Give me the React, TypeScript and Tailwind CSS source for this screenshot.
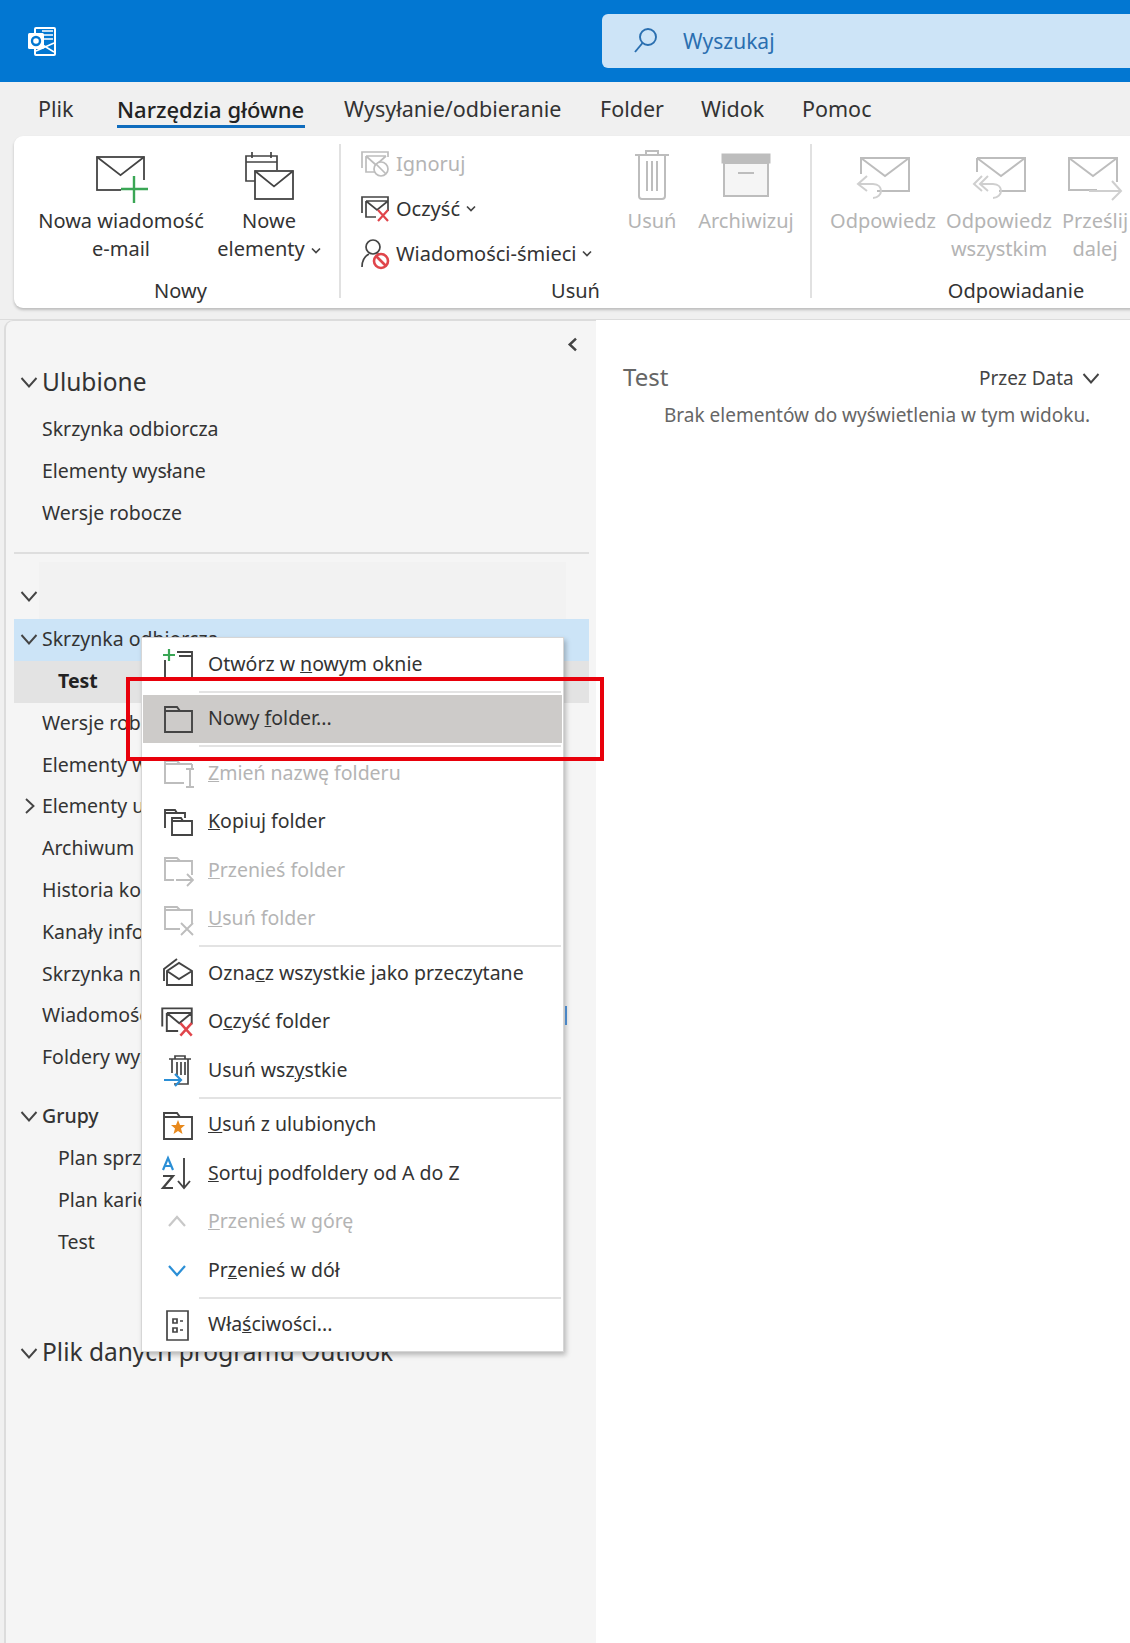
import type { ReactNode } from "react";

const dark = "#444";
const off = "#bdbdbd";

function Chevron({ dir = "down", color = "#444", size = 18, weight = 1.9 }: { dir?: "down" | "up" | "right" | "left"; color?: string; size?: number; weight?: number }) {
  const d = { down: "M1.500 5l7.500 8.500L16.500 5", up: "M1.500 13L9 4.500l7.500 8.500", right: "M6 2l7.500 7L6 16", left: "M12 2L4.500 9l7.500 7" }[dir];
  return (
    <svg width={size} height={size} viewBox="0 0 18 18" fill="none" stroke={color} strokeWidth={weight}>
      <path d={d} />
    </svg>
  );
}

function Caret() {
  return (
    <svg width="10" height="8" viewBox="0 0 10 8" fill="none" stroke="#444" strokeWidth="1.7" className="ml-[6px] inline-block">
      <path d="M1 1.500l4 4 4-4" />
    </svg>
  );
}

function LogoIcon() {
  return (
    <svg width="29" height="29" viewBox="0 0 29 29" fill="none">
      <rect x="8" y="1" width="20" height="27" rx="1" stroke="#fff" strokeWidth="2" />
      <path d="M15 4h11M15 8h11M15 12h11M9 24l18-8M14 17l13 8" stroke="#fff" strokeWidth="1.500" />
      <rect x="1" y="6" width="16" height="16" rx="1.500" fill="#fff" />
      <circle cx="9" cy="14" r="4" fill="none" stroke="#0277d2" strokeWidth="2.400" />
    </svg>
  );
}

function SearchIcon() {
  return (
    <svg width="26" height="28" viewBox="0 0 26 28" fill="none" stroke="#2a6fb0" strokeWidth="1.900">
      <circle cx="15" cy="10" r="8" />
      <path d="M9.500 16L2 25" />
    </svg>
  );
}

function Mail({ color, x = 0, y = 0, w = 48, h = 33 }: { color: string; x?: number; y?: number; w?: number; h?: number }) {
  return (
    <g stroke={color} fill="none" strokeWidth="1.800">
      <rect x={x} y={y} width={w} height={h} />
      <path d={`M${x} ${y}L${x + w / 2} ${y + h * 0.55}L${x + w} ${y}`} />
    </g>
  );
}

function NewMailIcon() {
  return (
    <svg width="56" height="56" viewBox="0 0 56 56" fill="none">
      <Mail color={dark} x={4} y={9} w={47} h={33} />
      <rect x="28" y="32" width="26" height="20" fill="#fff" />
      <path d="M41 28v27M28 41h27" stroke="#3aa655" strokeWidth="2.400" />
    </svg>
  );
}

function NewItemsIcon() {
  return (
    <svg width="56" height="56" viewBox="0 0 56 56" fill="none">
      <path d="M14 33H5V8h31v14M5 14h31M11 4v6M30 4v6" stroke={dark} strokeWidth="1.700" />
      <Mail color={dark} x={14} y={23} w={38} h={28} />
    </svg>
  );
}

function IgnoreIcon() {
  return (
    <svg width="30" height="28" viewBox="0 0 30 28" fill="none" stroke={off} strokeWidth="1.700">
      <path d="M2 18V2h26v5M6 6h20M6 6v16h10M6 6l10 9 10-9" />
      <circle cx="21" cy="19" r="7" fill="#fff" />
      <path d="M16 14l10 10" />
    </svg>
  );
}

function CleanIcon({ size = 30 }: { size?: number }) {
  return (
    <svg width={size} height={size - 2} viewBox="0 0 30 28" fill="none" stroke={dark} strokeWidth="1.700">
      <path d="M2 18V2h26v4M6 6h22v10M6 6v16h10M6 6l11 9 11-9" />
      <path d="M18 15l10 11M28 15L18 26" stroke="#e0454b" strokeWidth="2.200" />
    </svg>
  );
}

function JunkIcon() {
  return (
    <svg width="30" height="32" viewBox="0 0 30 32" fill="none" stroke={dark} strokeWidth="1.700">
      <circle cx="13" cy="9" r="7" />
      <path d="M2 29c0-7 3-11 7-13M17 16h2" />
      <circle cx="21" cy="23" r="7" stroke="#e0454b" strokeWidth="2.600" />
      <path d="M16 18l10 10" stroke="#e0454b" strokeWidth="2.600" />
    </svg>
  );
}

function TrashIcon() {
  return (
    <svg width="56" height="56" viewBox="0 0 56 56" fill="none" stroke={off} strokeWidth="2">
      <path d="M11 7h34M22 7V3h12v4M15 7v41a3 3 0 0 0 3 3h20a3 3 0 0 0 3-3V7M23 13v30M28 13v30M33 13v30" />
    </svg>
  );
}

function ArchiveIcon() {
  return (
    <svg width="56" height="56" viewBox="0 0 56 56" fill="none">
      <rect x="4" y="6" width="48" height="9" fill="#bdbdbd" stroke={off} />
      <rect x="6" y="15" width="44" height="33" fill="#f5f5f5" stroke={off} strokeWidth="2" />
      <path d="M20 25h16" stroke={off} strokeWidth="2" />
    </svg>
  );
}

function ReplyIcon() {
  return (
    <svg width="56" height="56" viewBox="0 0 56 56" fill="none">
      <path d="M10 26V10h48v33H26M10 10l24 18 24-18" stroke={off} strokeWidth="2" transform="translate(-4 0)" />
      <path d="M12 28l-9 8 9 7M3 36h15c6 0 8 4 8 7s-3 7-8 7" stroke="#cfcfcf" strokeWidth="2" />
    </svg>
  );
}

function ReplyAllIcon() {
  return (
    <svg width="56" height="56" viewBox="0 0 56 56" fill="none">
      <path d="M6 10h48v33H28M6 10v14M6 10l24 18 24-18" stroke={off} strokeWidth="2" />
      <path d="M11 28l-8 8 8 7M17 28l-8 8 8 7M10 36h12c6 0 8 4 8 7s-3 7-8 7" stroke="#cfcfcf" strokeWidth="2" />
    </svg>
  );
}

function ForwardIcon() {
  return (
    <svg width="56" height="56" viewBox="0 0 56 56" fill="none">
      <path d="M30 42H2V10h48v24M2 10l24 18 24-18" stroke={off} strokeWidth="2" />
      <path d="M22 43h32M45 33l9 10-9 9" stroke="#cfcfcf" strokeWidth="2" />
    </svg>
  );
}

function MenuIcon({ name }: { name: string }) {
  switch (name) {
    case "window":
      return (
        <svg width="34" height="34" viewBox="0 0 34 34" fill="none">
          <path d="M5 13v18h27V5H17M19 9h13" stroke={dark} strokeWidth="1.900" />
          <path d="M9 2v12M3 8h12" stroke="#3aa655" strokeWidth="2.200" />
        </svg>
      );
    case "folder":
      return (
        <svg width="34" height="34" viewBox="0 0 34 34" fill="none" stroke={dark} strokeWidth="1.900">
          <path d="M5 30V5h12l3 4h12v21zM5 9h15" />
        </svg>
      );
    case "rename":
      return (
        <svg width="34" height="34" viewBox="0 0 34 34" fill="none" stroke={off} strokeWidth="1.900">
          <path d="M24 27H5V5h12l3 3h12M5 8h15M32 8v4M26 13h8M30 13v17M26 31h8" />
        </svg>
      );
    case "copy":
      return (
        <svg width="34" height="34" viewBox="0 0 34 34" fill="none" stroke={dark} strokeWidth="1.900">
          <path d="M5 23V5h10l2 3h8v5M5 8h12M12 30V13h9l2 3h9v14zM12 16h11" />
        </svg>
      );
    case "move":
      return (
        <svg width="34" height="34" viewBox="0 0 34 34" fill="none" stroke={off} strokeWidth="1.900">
          <path d="M14 27H5V5h12l3 3h12v14M5 8h15M16 27h17M27 21l6 6-6 6" />
        </svg>
      );
    case "delete":
      return (
        <svg width="34" height="34" viewBox="0 0 34 34" fill="none" stroke={off} strokeWidth="1.900">
          <path d="M20 27H5V5h12l3 3h12v14M5 8h15M21 21l12 12M33 21L21 33" />
        </svg>
      );
    case "read":
      return (
        <svg width="34" height="34" viewBox="0 0 34 34" fill="none" stroke={dark} strokeWidth="1.900">
          <path d="M7 29V15l12-8 13 8v14zM7 15l12 8 13-8M4 25V13L17 3" />
        </svg>
      );
    case "clean":
      return <CleanIcon size={34} />;
    case "deleteall":
      return (
        <svg width="34" height="34" viewBox="0 0 34 34" fill="none">
          <path d="M9 6h22M15 6V3h10v3M12 6v14M28 6v25H14M17 9v13M21 9v13M25 9v13" stroke={dark} strokeWidth="1.700" />
          <path d="M4 27h17M15 21l6 6-6 6" stroke="#2b8fd6" strokeWidth="2.200" />
        </svg>
      );
    case "star":
      return (
        <svg width="34" height="34" viewBox="0 0 34 34" fill="none">
          <path d="M4 31V5h13l3 4h12v22zM4 9h16" stroke={dark} strokeWidth="1.900" />
          <path d="M18 12l2 5h5l-4 3.500 1.500 5.500-4.500-3-4.500 3 1.500-5.500L11 17h5z" fill="#e8891c" />
        </svg>
      );
    case "sort":
      return (
        <svg width="34" height="36" viewBox="0 0 34 36" fill="none">
          <path d="M3 15l5-12 5 12M5 11h6" stroke="#2b8fd6" strokeWidth="2.200" />
          <path d="M3 21h10L3 33h10" stroke={dark} strokeWidth="2.200" />
          <path d="M24 3v30M18 26l6 7 6-7" stroke={dark} strokeWidth="1.900" />
        </svg>
      );
    case "up":
      return (
        <svg width="34" height="34" viewBox="0 0 34 34" fill="none" stroke="#c8c8c8" strokeWidth="2.200">
          <path d="M9 21l8-9 8 9" />
        </svg>
      );
    case "down":
      return (
        <svg width="34" height="34" viewBox="0 0 34 34" fill="none" stroke="#2b8fd6" strokeWidth="2.200">
          <path d="M9 13l8 9 8-9" />
        </svg>
      );
    default:
      return (
        <svg width="34" height="34" viewBox="0 0 34 34" fill="none" stroke={dark} strokeWidth="1.700">
          <path d="M7 3h21v29H7zM13 11h4v4h-4zM13 20h4v4h-4zM20 13h3M20 22h3" />
        </svg>
      );
  }
}

function RibbonButton({ icon, lines, disabled, className }: { icon: ReactNode; lines: ReactNode[]; disabled?: boolean; className: string }) {
  return (
    <div className={`flex shrink-0 flex-col items-center ${className}`}>
      <div className="mb-[3px] flex h-[56px] items-center justify-center">{icon}</div>
      {lines.map((l, i) => (
        <div key={i} className={`h-[28px] whitespace-nowrap text-center text-[20px] leading-[28px] ${disabled ? "text-[#b4b4b4]" : "text-[#333]"}`}>
          {l}
        </div>
      ))}
    </div>
  );
}

function SmallRow({ icon, children, disabled }: { icon: ReactNode; children: ReactNode; disabled?: boolean }) {
  return (
    <div className={`flex h-[45px] items-center whitespace-nowrap text-[20px] ${disabled ? "text-[#b4b4b4]" : "text-[#333]"}`}>
      <div className="flex w-[36px] shrink-0 items-center">{icon}</div>
      {children}
    </div>
  );
}

function Group({ label, className, labelClass = "", children }: { label: string; className: string; labelClass?: string; children: ReactNode }) {
  return (
    <div className={`flex shrink-0 flex-col pt-[12px] ${className}`}>
      <div className="flex h-[129px]">{children}</div>
      <div className={`h-[28px] text-center text-[20px] leading-[28px] text-[#333] ${labelClass}`}>{label}</div>
    </div>
  );
}

function FolderRow({ children, chevron, indent, className = "", h = "h-[41.8px] pb-[2px]" }: { children?: ReactNode; chevron?: "down" | "right"; indent?: boolean; className?: string; h?: string }) {
  return (
    <div className={`flex items-center whitespace-nowrap ${h} ${indent ? "pl-[44px]" : chevron ? "pl-[6px]" : "pl-[28px]"} ${className}`}>
      {chevron && (
        <span className="flex w-[22px] shrink-0 items-center">
          <Chevron dir={chevron} />
        </span>
      )}
      {children}
    </div>
  );
}

type Item = { icon: string; label: ReactNode; disabled?: boolean; active?: boolean };

const menu: (Item | "sep")[] = [
  { icon: "window", label: <>Otwórz w <u>n</u>owym oknie</> },
  "sep",
  { icon: "folder", label: <>Nowy <u>f</u>older...</>, active: true },
  "sep",
  { icon: "rename", label: <><u>Z</u>mień nazwę folderu</>, disabled: true },
  { icon: "copy", label: <><u>K</u>opiuj folder</> },
  { icon: "move", label: <><u>P</u>rzenieś folder</>, disabled: true },
  { icon: "delete", label: <><u>U</u>suń folder</>, disabled: true },
  "sep",
  { icon: "read", label: <>Ozna<u>c</u>z wszystkie jako przeczytane</> },
  { icon: "clean", label: <>O<u>c</u>zyść folder</> },
  { icon: "deleteall", label: <>Usuń wsz<u>y</u>stkie</> },
  "sep",
  { icon: "star", label: <><u>U</u>suń z ulubionych</> },
  { icon: "sort", label: <><u>S</u>ortuj podfoldery od A do Z</> },
  { icon: "up", label: <><u>P</u>rzenieś w górę</>, disabled: true },
  { icon: "down", label: <>Pr<u>z</u>enieś w dół</> },
  "sep",
  { icon: "props", label: <>Wła<u>ś</u>ciwości...</> },
];

export default function App() {
  return (
    <div className="relative flex h-[1643px] w-[1130px] flex-col overflow-hidden bg-[#f0f0f0] font-['Noto_Sans',sans-serif] text-[19.5px] text-[#333]">
      {/* Title bar */}
      <header className="flex h-[82px] shrink-0 items-center bg-[#0277d2] pl-[27px]">
        <LogoIcon />
        <div className="ml-[546px] flex h-[54px] flex-1 items-center rounded-l-[6px] bg-[#cde4f7] pl-[31px] text-[#2a6fb0]">
          <SearchIcon />
          <span className="ml-[24px] pt-[2px] text-[21px]">Wyszukaj</span>
        </div>
      </header>

      {/* Tabs */}
      <nav className="flex h-[54px] shrink-0 pl-[38px] text-[21.5px]">
        <span className="w-[79px] pt-[11px]">Plik</span>
        <span className="relative h-[46px] w-[188px] whitespace-nowrap pt-[11px] text-[22px] font-medium text-[#222]">
          Narzędzia główne
          <span className="absolute inset-x-0 bottom-0 h-[3px] bg-[#0f6cbd]" />
        </span>
        <span className="ml-[39px] w-[256px] pt-[11px]">Wysyłanie/odbieranie</span>
        <span className="w-[101px] pt-[11px]">Folder</span>
        <span className="w-[101px] pt-[11px]">Widok</span>
        <span className="pt-[11px]">Pomoc</span>
      </nav>

      {/* Ribbon */}
      <section className="ml-[14px] flex h-[172px] w-[1220px] shrink-0 rounded-[9px] bg-white shadow-[0_2px_3px_rgba(0,0,0,0.22)]">
        <Group label="Nowy" labelClass="pl-[8px]" className="w-[325px]">
          <RibbonButton className="ml-[23px] w-[168px]" icon={<NewMailIcon />} lines={["Nowa wiadomość", "e-mail"]} />
          <RibbonButton className="w-[128px]" icon={<NewItemsIcon />} lines={["Nowe", <>elementy<Caret /></>]} />
        </Group>
        <div className="mt-[8px] h-[154px] w-[2px] shrink-0 bg-[#e1e1e1]" />
        <Group label="Usuń" className="w-[469px]">
          <div className="-mt-[7px] ml-[19px] w-[259px] shrink-0">
            <SmallRow disabled icon={<IgnoreIcon />}>Ignoruj</SmallRow>
            <SmallRow icon={<CleanIcon />}>Oczyść<Caret /></SmallRow>
            <SmallRow icon={<JunkIcon />}>Wiadomości-śmieci<Caret /></SmallRow>
          </div>
          <RibbonButton disabled className="w-[66px]" icon={<TrashIcon />} lines={["Usuń"]} />
          <RibbonButton disabled className="w-[122px]" icon={<ArchiveIcon />} lines={["Archiwizuj"]} />
        </Group>
        <div className="mt-[8px] h-[154px] w-[2px] shrink-0 bg-[#e1e1e1]" />
        <Group label="Odpowiadanie" className="w-[408px]">
          <RibbonButton disabled className="ml-[13px] w-[116px]" icon={<ReplyIcon />} lines={["Odpowiedz"]} />
          <RibbonButton disabled className="w-[116px]" icon={<ReplyAllIcon />} lines={["Odpowiedz", "wszystkim"]} />
          <RibbonButton disabled className="w-[76px]" icon={<ForwardIcon />} lines={["Prześlij", "dalej"]} />
        </Group>
      </section>

      {/* Panes */}
      <main className="mt-[11px] flex min-h-0 flex-1 border-t border-[#dcdcdc] pl-[4px]">
        <aside className="w-[592px] shrink-0 rounded-tl-[9px] border-l-2 border-t border-[#dcdcdc] bg-[#f5f5f5] pl-[8px] pr-[7px] pt-[3px]">
          <div className="flex h-[40px] items-center justify-end pr-[8px]">
            <Chevron dir="left" size={15} color="#444" weight={3} />
          </div>
          <FolderRow chevron="down" h="h-[36px]" className="text-[24.5px]">Ulubione</FolderRow>
          <div className="h-[8px]" />
          <FolderRow h="h-[42px]">Skrzynka odbiorcza</FolderRow>
          <FolderRow h="h-[42px]">Elementy wysłane</FolderRow>
          <FolderRow h="h-[42px]">Wersje robocze</FolderRow>
          <div className="mt-[18px] h-[2px] bg-[#dedede]" />
          <div className="mt-[8px] flex h-[57px] pl-[6px]">
            <span className="flex w-[18px] items-end pb-[14px]">
              <Chevron dir="down" />
            </span>
            <div className="ml-[1px] mr-[23px] flex-1 bg-[#f2f2f2]" />
          </div>
          <FolderRow chevron="down" className="bg-[#cce4f7]">Skrzynka odbiorcza</FolderRow>
          <FolderRow indent className="bg-[#e3e3e3] font-bold text-[#222]">Test</FolderRow>
          <FolderRow>Wersje robocze</FolderRow>
          <FolderRow>Elementy wysłane</FolderRow>
          <FolderRow chevron="right">Elementy usunięte</FolderRow>
          <FolderRow>Archiwum</FolderRow>
          <FolderRow>Historia konwersacji</FolderRow>
          <FolderRow>Kanały informacyjne</FolderRow>
          <FolderRow>Skrzynka nadawcza</FolderRow>
          <FolderRow>Wiadomości-śmieci</FolderRow>
          <FolderRow>Foldery wyszukiwania</FolderRow>
          <div className="h-[16px]" />
          <FolderRow chevron="down" h="h-[42px]" className="font-medium">Grupy</FolderRow>
          <FolderRow indent h="h-[42px]">Plan sprzedaży</FolderRow>
          <FolderRow indent h="h-[42px]">Plan kariery</FolderRow>
          <FolderRow indent h="h-[42px]">Test</FolderRow>
          <div className="h-[69px]" />
          <FolderRow chevron="down" h="h-[42px]" className="text-[24.5px]">Plik danych programu Outlook</FolderRow>
        </aside>

        <div className="flex-1 bg-white pl-[27px] pt-[39px]">
          <div className="flex h-[36px] items-center">
            <span className="w-[356px] text-[24px] text-[#666]">Test</span>
            <span className="pt-[2px] text-[19px] text-[#444]">Przez Data</span>
            <span className="ml-[8px] pt-[2px]"><Chevron /></span>
          </div>
          <div className="whitespace-nowrap pl-[41px] pt-[6px] text-[19px] leading-[28px] text-[#666]">Brak elementów do wyświetlenia w tym widoku.</div>
        </div>
      </main>

      {/* Context menu */}
      <div className="absolute left-[141px] top-[637px] w-[423px] border border-[#d6d6d6] bg-white pb-[2px] pt-[2px] text-[#333] shadow-[2px_3px_5px_rgba(0,0,0,0.25)]">
        {menu.map((m, i) =>
          m === "sep" ? (
            <div key={i} className="ml-[57px] mr-[2px] py-[2px]">
              <div className="h-[2px] bg-[#e3e3e3]" />
            </div>
          ) : (
            <div key={i} className={`mx-[1px] flex h-[48.5px] items-center whitespace-nowrap pl-[17px] ${m.active ? "bg-[#cdcbc9]" : ""} ${m.disabled ? "text-[#b4b4b4]" : ""}`}>
              <span className="flex w-[34px] shrink-0 items-center justify-center"><MenuIcon name={m.icon} /></span>
              <span className="ml-[14px] pb-[2px]">{m.label}</span>
            </div>
          )
        )}
      </div>

      {/* Bit of the pane's scroll marker that shows beside the menu */}
      <div className="absolute left-[565px] top-[1006px] h-[19px] w-[2px] bg-[#4a86c5]" />

      {/* Red annotation frame */}
      <div className="absolute left-[126px] top-[677px] h-[84px] w-[478px] border-[4px] border-[#e8000b]" />
    </div>
  );
}
